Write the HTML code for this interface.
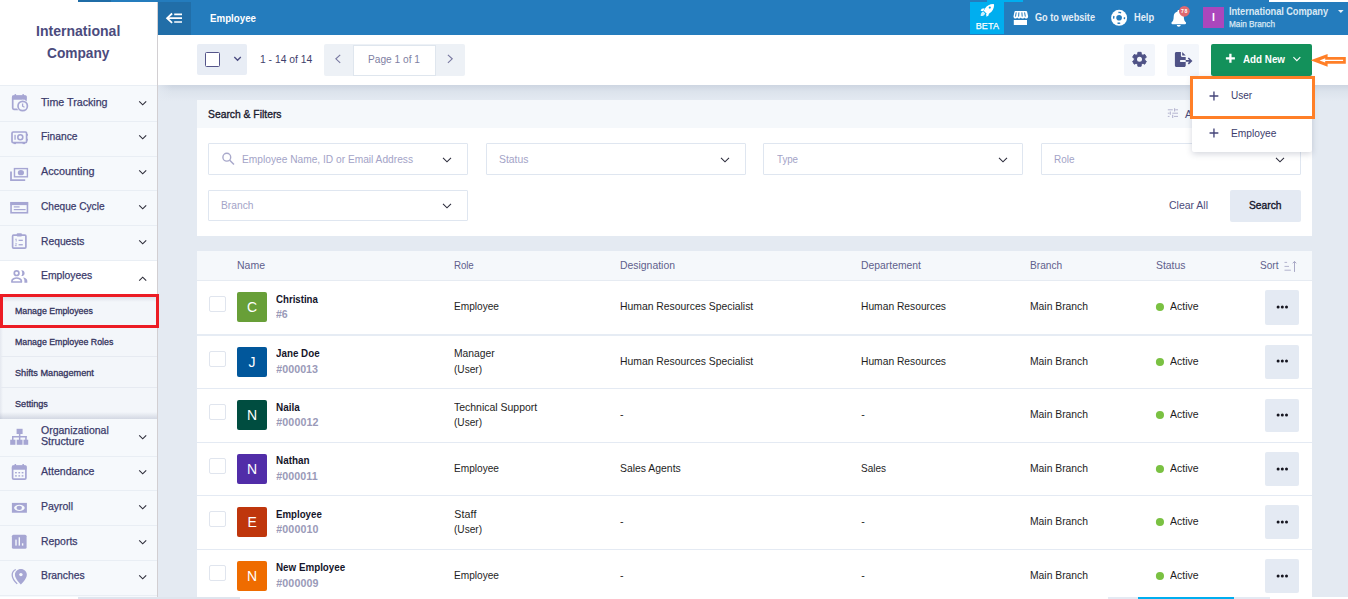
<!DOCTYPE html>
<html lang="en"><head><meta charset="utf-8"><title>Employee</title>
<style>
*{box-sizing:border-box;margin:0;padding:0}
html,body{width:1348px;height:599px;overflow:hidden}
body{position:relative;background:#e4eaf2;font-family:"Liberation Sans",sans-serif;}
.t{position:absolute;white-space:pre;transform-origin:0 0;font-family:"Liberation Sans",sans-serif;}
.a{position:absolute;}
svg{position:absolute;overflow:visible}
.sep{left:0;width:156.5px;height:1px;background:#e9eef4}
.sep2{left:0;width:156.5px;height:1px;background:#e6eaf1}
.inp{width:259.5px;height:31.5px;background:#fff;border:1px solid #dfe6f0;border-radius:1px}
.rsep{left:197px;width:1114.5px;height:1px;background:#e4eaf3}
.cb{width:17px;height:16px;border:1px solid #e0e5ee;border-radius:2px;background:#fff;left:209px}
.av{left:237px;width:30px;height:30px;border-radius:2px}
.act{left:1265px;width:34px;height:34.6px;background:#e4eaf3;border-radius:2px}
.dot{left:1155.75px;width:7.75px;height:7.75px;border-radius:50%;background:#7ac142}

</style></head>
<body>
<!-- content background / shadow under toolbar -->
<div class="a" style="left:158px;top:84.5px;width:1190px;height:16px;background:linear-gradient(90deg,rgba(228,234,242,.75),rgba(228,234,242,0) 14px),linear-gradient(#cdd5e1,#dce3ec 40%,#e4eaf2)"></div>

<!-- SIDEBAR -->
<div class="a" id="sidebar" style="left:0;top:0;width:157.5px;height:597px;background:#f6f9fc;border-right:1px solid #d2cfd2"></div>
<div class="a" style="left:0;top:0;width:156.5px;height:85.5px;background:#fff;border-bottom:1px solid #e9eef4"></div>
<!-- item separators -->
<div class="a sep" style="top:121px"></div>
<div class="a sep" style="top:155.5px"></div>
<div class="a sep" style="top:190px"></div>
<div class="a sep" style="top:225px"></div>
<div class="a sep" style="top:260px"></div>
<div class="a" style="left:0;top:260.5px;width:156.5px;height:34px;background:#fff"></div>
<!-- submenu -->
<div class="a" style="left:0;top:294.5px;width:156.5px;height:124px;background:linear-gradient(rgba(120,130,160,.26),rgba(120,130,160,0) 7px),linear-gradient(0deg,rgba(120,130,160,.26),rgba(120,130,160,0) 7px),linear-gradient(90deg,rgba(120,130,160,.12),rgba(120,130,160,0) 3px),#f3f6fa"></div>
<div class="a sep2" style="top:327px"></div>
<div class="a sep2" style="top:356px"></div>
<div class="a sep2" style="top:387px"></div>
<div class="a sep" style="top:455.5px"></div>
<div class="a sep" style="top:490px"></div>
<div class="a sep" style="top:525px"></div>
<div class="a sep" style="top:560px"></div>
<div class="a sep" style="top:594.5px"></div>
<!-- red highlight -->
<div class="a" style="left:-0.4px;top:294.15px;width:159.4px;height:33.85px;border:3px solid #ec1c24;"></div>

<!-- TOP STRIP -->
<div class="a" style="left:78px;top:0;width:32.5px;height:2px;background:#1f6ca6"></div>
<div class="a" style="left:110.5px;top:0;width:1158.5px;height:2px;background:#247cbd"></div>
<div class="a" style="left:1269px;top:0;width:79px;height:2px;background:#fff"></div>
<!-- TOPBAR -->
<div class="a" style="left:157.5px;top:2px;width:1190.5px;height:33px;background:#247cbd"></div>
<div class="a" style="left:157.5px;top:2px;width:33px;height:33px;background:#216ea8"></div>
<!-- beta -->
<div class="a" style="left:970px;top:2px;width:34px;height:32px;background:#00aeef"></div>
<div class="a" style="left:987px;top:0;width:36px;height:2px;background:#00aeef"></div>
<!-- user avatar -->
<div class="a" style="left:1202.5px;top:7px;width:21.5px;height:20.5px;background:#ab47bc"></div>
<!-- notification badge -->

<!-- TOOLBAR -->
<div class="a" style="left:158px;top:35px;width:1190px;height:49.5px;background:#fff"></div>
<div class="a" style="left:197px;top:44.25px;width:49.75px;height:30.75px;background:#e8edf5;border-radius:2px"></div>
<div class="a" style="left:205px;top:52px;width:15px;height:15px;background:#fff;border:1px solid #55558a;border-radius:1.5px"></div>
<div class="a" style="left:324px;top:44.25px;width:140.5px;height:31.5px;background:#edf1f6;border-radius:2px"></div>
<div class="a" style="left:352.5px;top:44.5px;width:83.5px;height:31px;background:#fff;border:1px solid #dfe6ee"></div>
<div class="a" style="left:1124px;top:44px;width:31px;height:31.5px;background:#f3f6fb;border-radius:2px"></div>
<div class="a" style="left:1167px;top:44px;width:31.5px;height:31.5px;background:#f3f6fb;border-radius:2px"></div>
<div class="a" style="left:1210.5px;top:44px;width:101px;height:31.5px;background:#13915b;border-radius:2px"></div>

<!-- FILTER CARD -->
<div class="a" style="left:197px;top:100px;width:1114.5px;height:135.75px;background:#fff"></div>
<div class="a" style="left:197px;top:100px;width:1114.5px;height:27.5px;background:#f5f8fb"></div>
<div class="a inp" style="left:208px;top:143px"></div>
<div class="a inp" style="left:486.25px;top:143px"></div>
<div class="a inp" style="left:762.75px;top:143px;width:260px"></div>
<div class="a inp" style="left:1041px;top:143px"></div>
<div class="a inp" style="left:208px;top:190px;height:30.5px"></div>
<div class="a" style="left:1229.75px;top:189.75px;width:70.75px;height:31.75px;background:#e4eaf3;border-radius:2px"></div>

<!-- TABLE -->
<div class="a" style="left:197px;top:250.5px;width:1114.5px;height:350px;background:#fff"></div>
<div class="a" style="left:197px;top:250.5px;width:1114.5px;height:30px;background:#f5f8fb;border-bottom:1px solid #e6ebf2"></div>
<div class="a" style="left:197px;top:333.7px;width:1114.5px;height:1.9px;background:#e6ecf4"></div>
<div class="a rsep" style="top:387.6px"></div>
<div class="a rsep" style="top:441.6px"></div>
<div class="a rsep" style="top:494.8px"></div>
<div class="a rsep" style="top:548.6px"></div>
<div class="a cb" style="top:296.00px"></div>
<div class="a av" style="top:292.10px;background:#689f38"></div>
<svg style="left:1155px;top:302.00px" width="10" height="10" viewBox="1155 302.00 10 10"><circle cx="1159.95" cy="307.00" r="4.05" fill="#7ac142"/></svg>
<div class="a act" style="top:290.10px;height:34.65px"></div>
<svg style="left:1274px;top:303.52px" width="17" height="6" viewBox="1274 303.52 17 6"><g fill="#15151f"><circle cx="1278.1" cy="306.52" r="1.5"/><circle cx="1282.3" cy="306.52" r="1.5"/><circle cx="1286.5" cy="306.52" r="1.5"/></g></svg>
<div class="a cb" style="top:350.80px"></div>
<div class="a av" style="top:346.90px;background:#01579b"></div>
<svg style="left:1155px;top:357.00px" width="10" height="10" viewBox="1155 357.00 10 10"><circle cx="1159.95" cy="362.00" r="4.05" fill="#7ac142"/></svg>
<div class="a act" style="top:345.05px;height:33.7px"></div>
<svg style="left:1274px;top:358.47px" width="17" height="6" viewBox="1274 358.47 17 6"><g fill="#15151f"><circle cx="1278.1" cy="361.47" r="1.5"/><circle cx="1282.3" cy="361.47" r="1.5"/><circle cx="1286.5" cy="361.47" r="1.5"/></g></svg>
<div class="a cb" style="top:404.30px"></div>
<div class="a av" style="top:400.40px;background:#004d40"></div>
<svg style="left:1155px;top:410.00px" width="10" height="10" viewBox="1155 410.00 10 10"><circle cx="1159.95" cy="415.00" r="4.05" fill="#7ac142"/></svg>
<div class="a act" style="top:398.55px;height:33.7px"></div>
<svg style="left:1274px;top:411.97px" width="17" height="6" viewBox="1274 411.97 17 6"><g fill="#15151f"><circle cx="1278.1" cy="414.97" r="1.5"/><circle cx="1282.3" cy="414.97" r="1.5"/><circle cx="1286.5" cy="414.97" r="1.5"/></g></svg>
<div class="a cb" style="top:457.90px"></div>
<div class="a av" style="top:454.00px;background:#512da8"></div>
<svg style="left:1155px;top:464.00px" width="10" height="10" viewBox="1155 464.00 10 10"><circle cx="1159.95" cy="469.00" r="4.05" fill="#7ac142"/></svg>
<div class="a act" style="top:452.15px;height:33.7px"></div>
<svg style="left:1274px;top:465.57px" width="17" height="6" viewBox="1274 465.57 17 6"><g fill="#15151f"><circle cx="1278.1" cy="468.57" r="1.5"/><circle cx="1282.3" cy="468.57" r="1.5"/><circle cx="1286.5" cy="468.57" r="1.5"/></g></svg>
<div class="a cb" style="top:511.20px"></div>
<div class="a av" style="top:507.30px;background:#bf360c"></div>
<svg style="left:1155px;top:517.00px" width="10" height="10" viewBox="1155 517.00 10 10"><circle cx="1159.95" cy="522.00" r="4.05" fill="#7ac142"/></svg>
<div class="a act" style="top:505.45px;height:33.7px"></div>
<svg style="left:1274px;top:518.87px" width="17" height="6" viewBox="1274 518.87 17 6"><g fill="#15151f"><circle cx="1278.1" cy="521.87" r="1.5"/><circle cx="1282.3" cy="521.87" r="1.5"/><circle cx="1286.5" cy="521.87" r="1.5"/></g></svg>
<div class="a cb" style="top:564.90px"></div>
<div class="a av" style="top:561.00px;background:#ef6c00"></div>
<svg style="left:1155px;top:571.00px" width="10" height="10" viewBox="1155 571.00 10 10"><circle cx="1159.95" cy="576.00" r="4.05" fill="#7ac142"/></svg>
<div class="a act" style="top:559.15px;height:33.7px"></div>
<svg style="left:1274px;top:572.57px" width="17" height="6" viewBox="1274 572.57 17 6"><g fill="#15151f"><circle cx="1278.1" cy="575.57" r="1.5"/><circle cx="1282.3" cy="575.57" r="1.5"/><circle cx="1286.5" cy="575.57" r="1.5"/></g></svg>

<!-- DROPDOWN -->
<div class="a" style="z-index:5;left:1192px;top:76px;width:119.8px;height:76.1px;background:#fff;border-radius:0 0 2px 2px;box-shadow:0 2px 6px rgba(60,70,100,.22)"></div>
<div class="a" style="z-index:5;left:1190px;top:76.1px;width:125px;height:42.6px;border:3px solid #ff7f27;background:#fff"></div>

<!-- bottom strips -->
<div class="a" style="z-index:7;left:0;top:596.8px;width:1348px;height:2.2px;background:#fff"></div>
<div class="a" style="z-index:7;left:78px;top:596.8px;width:161.5px;height:2.2px;background:#dfe5ee"></div>
<div class="a" style="z-index:7;left:1108.2px;top:596.8px;width:161.8px;height:2.2px;background:#e4eaf3"></div>
<div class="a" style="z-index:7;left:1137.9px;top:596.8px;width:96.1px;height:2.2px;background:#00aeef"></div>

<svg style="left:10px;top:92px" width="22" height="22" viewBox="10 92 22 22">
<rect x="12.7" y="96.1" width="13.2" height="13.2" rx="1.2" fill="none" stroke="#a6a6d3" stroke-width="1.7"/>
<rect x="12" y="95.4" width="14.6" height="4.3" rx="1" fill="#a6a6d3"/>
<rect x="14.6" y="94.1" width="1.5" height="3" fill="#a6a6d3"/><rect x="22.4" y="94.1" width="1.5" height="3" fill="#a6a6d3"/>
<circle cx="22.7" cy="106" r="6.2" fill="#f6f9fc"/>
<circle cx="22.7" cy="106" r="4.7" fill="none" stroke="#a6a6d3" stroke-width="1.7"/>
<path d="M22.6 103.4v2.8l1.9 1.1" fill="none" stroke="#a6a6d3" stroke-width="1.3"/></svg>
<svg style="left:10px;top:129px" width="22" height="18" viewBox="10 129 22 18">
<rect x="12" y="132" width="14.6" height="10.6" rx="1.2" fill="none" stroke="#a6a6d3" stroke-width="1.7"/>
<rect x="13.6" y="143" width="2.4" height="1.1" fill="#a6a6d3"/><rect x="22.6" y="143" width="2.4" height="1.1" fill="#a6a6d3"/>
<rect x="14.4" y="134.8" width="1.3" height="5" fill="#a6a6d3"/>
<circle cx="20.3" cy="137.3" r="2.5" fill="none" stroke="#a6a6d3" stroke-width="1.6"/>
<rect x="26.9" y="134" width="1" height="1.8" fill="#a6a6d3"/><rect x="26.9" y="138.8" width="1" height="1.8" fill="#a6a6d3"/></svg>
<svg style="left:9px;top:166px" width="22" height="17" viewBox="9 166 22 17">
<path d="M11 171.4V180.2H25.2" fill="none" stroke="#a6a6d3" stroke-width="1.8"/>
<rect x="13.75" y="167.9" width="14.35" height="9.6" fill="#a6a6d3"/>
<rect x="15.2" y="169.3" width="11.5" height="6.8" fill="#f6f9fc"/>
<ellipse cx="20.9" cy="172.7" rx="3.1" ry="2.6" fill="#a6a6d3"/></svg>
<svg style="left:9px;top:200px" width="22" height="16" viewBox="9 200 22 16">
<rect x="11.05" y="202.75" width="16.4" height="10" fill="none" stroke="#a6a6d3" stroke-width="1.6"/>
<rect x="10.4" y="202.1" width="17.7" height="3" fill="#a6a6d3"/>
<rect x="13.8" y="206.3" width="5.8" height="1.2" fill="#a6a6d3"/>
<rect x="13.8" y="209" width="11.8" height="1.2" fill="#a6a6d3"/></svg>
<svg style="left:10px;top:231px" width="20" height="20" viewBox="10 231 20 20">
<rect x="12.6" y="235.2" width="13.3" height="12.9" rx="1" fill="none" stroke="#a6a6d3" stroke-width="1.7"/>
<rect x="16.7" y="233.2" width="5.2" height="3.2" rx="0.9" fill="#a6a6d3"/>
<path d="M15.3 239.4l.9-.5v2.7M15.2 243.6c.3-.5 1.4-.5 1.4.2 0 .6-1.4 1.2-1.4 1.9h1.6" fill="none" stroke="#a6a6d3" stroke-width=".8"/>
<rect x="18.6" y="239.7" width="4.2" height="1.3" fill="#a6a6d3"/>
<rect x="18.6" y="244.1" width="4.2" height="1.3" fill="#a6a6d3"/></svg>
<svg style="left:10px;top:269px" width="20" height="16" viewBox="10 269 20 16">
<circle cx="16.6" cy="273.2" r="2.3" fill="none" stroke="#a6a6d3" stroke-width="1.7"/>
<path d="M11.95 282v-1.1c0-1.900 3.100-2.900 4.700-2.900s4.700 1 4.700 2.900v1.100z" fill="none" stroke="#a6a6d3" stroke-width="1.700" stroke-linejoin="round"/>
<path d="M21.300 270.300c1.900-.2 3.300 1.200 3.300 2.900s-1.400 3.100-3.300 2.900c1.300-1.700 1.300-4.100 0-5.800z" fill="#a6a6d3"/>
<path d="M23 277.600c2.100.3 4.300 1.300 4.300 3.200v1.900h-2.900v-1.900c0-1.300-.5-2.400-1.400-3.200z" fill="#a6a6d3"/></svg>
<svg style="left:9px;top:428px" width="21" height="18" viewBox="9 428 21 18">
<rect x="16.6" y="428.8" width="6" height="5.2" fill="#a6a6d3"/>
<rect x="10.2" y="439.7" width="5.2" height="5.1" fill="#a6a6d3"/>
<rect x="16.7" y="439.7" width="5.8" height="5.1" fill="#a6a6d3"/>
<rect x="23.5" y="439.7" width="4.7" height="5.1" fill="#a6a6d3"/>
<rect x="18.9" y="433.5" width="1.5" height="6.500" fill="#a6a6d3"/>
<rect x="12" y="436" width="14.700" height="1.500" fill="#a6a6d3"/>
<rect x="12" y="436" width="1.500" height="4" fill="#a6a6d3"/>
<rect x="25.200" y="436" width="1.500" height="4" fill="#a6a6d3"/></svg>
<svg style="left:10px;top:462px" width="20" height="20" viewBox="10 462 20 20">
<rect x="12.6" y="466.2" width="13.3" height="13" rx="1.2" fill="none" stroke="#a6a6d3" stroke-width="1.7"/>
<rect x="11.9" y="465.5" width="14.7" height="4.3" rx="1" fill="#a6a6d3"/>
<rect x="14.6" y="464" width="1.5" height="3" fill="#a6a6d3"/><rect x="22.4" y="464" width="1.5" height="3" fill="#a6a6d3"/>
<g fill="#a6a6d3"><rect x="15.1" y="472" width="1.7" height="1.4"/><rect x="18.4" y="472" width="1.7" height="1.4"/><rect x="21.7" y="472" width="1.7" height="1.4"/>
<rect x="15.1" y="475.2" width="1.7" height="1.4"/><rect x="18.4" y="475.2" width="1.7" height="1.4"/><rect x="21.7" y="475.2" width="1.7" height="1.4"/></g></svg>
<svg style="left:10px;top:501px" width="20" height="14" viewBox="10 501 20 14">
<rect x="11.9" y="502.9" width="15" height="9.85" fill="#a6a6d3"/>
<ellipse cx="19.4" cy="507.85" rx="5.3" ry="3.1" fill="#f6f9fc"/>
<ellipse cx="19.3" cy="507.85" rx="2.7" ry="2.1" fill="#a6a6d3"/></svg>
<svg style="left:10px;top:533px" width="20" height="18" viewBox="10 533 20 18">
<rect x="11.9" y="534.75" width="14.7" height="14" rx="1.6" fill="#a6a6d3"/>
<rect x="15.3" y="539.6" width="1.4" height="6" fill="#f6f9fc"/>
<rect x="18.6" y="537.3" width="1.4" height="8.3" fill="#f6f9fc"/>
<rect x="21.9" y="543.3" width="1.4" height="2.3" fill="#f6f9fc"/></svg>
<svg style="left:10px;top:567px" width="20" height="20" viewBox="10 567 20 20">
<path d="M20.9 568.9c-3.3 0-5.95 2.5-5.95 5.8c0 4.2 5.95 9.8 5.95 9.8s5.95-5.6 5.95-9.8c0-3.3-2.65-5.8-5.95-5.8z" fill="#a6a6d3"/>
<circle cx="20.9" cy="574.6" r="1.7" fill="#f6f9fc"/>
<path d="M15.8 569.5c-2.2 1-3.6 3-3.6 5.4c0 3.2 2.8 6.800 5 9" fill="none" stroke="#a6a6d3" stroke-width="1.3"/></svg>
<svg style="left:137px;top:98.8px" width="11" height="8" viewBox="137 98.8 11 8"><path d="M139.2 101.1l3.5 3.5l3.5-3.5" fill="none" stroke="#30303c" stroke-width="1.15"/></svg>
<svg style="left:137px;top:133.4px" width="11" height="8" viewBox="137 133.4 11 8"><path d="M139.2 135.70000000000002l3.5 3.5l3.5-3.5" fill="none" stroke="#30303c" stroke-width="1.15"/></svg>
<svg style="left:137px;top:168.0px" width="11" height="8" viewBox="137 168.0 11 8"><path d="M139.2 170.3l3.5 3.5l3.5-3.5" fill="none" stroke="#30303c" stroke-width="1.15"/></svg>
<svg style="left:137px;top:202.8px" width="11" height="8" viewBox="137 202.8 11 8"><path d="M139.2 205.10000000000002l3.5 3.5l3.5-3.5" fill="none" stroke="#30303c" stroke-width="1.15"/></svg>
<svg style="left:137px;top:237.8px" width="11" height="8" viewBox="137 237.8 11 8"><path d="M139.2 240.10000000000002l3.5 3.5l3.5-3.5" fill="none" stroke="#30303c" stroke-width="1.15"/></svg>
<svg style="left:137px;top:432.8px" width="11" height="8" viewBox="137 432.8 11 8"><path d="M139.2 435.1l3.5 3.5l3.5-3.5" fill="none" stroke="#30303c" stroke-width="1.15"/></svg>
<svg style="left:137px;top:467.8px" width="11" height="8" viewBox="137 467.8 11 8"><path d="M139.2 470.1l3.5 3.5l3.5-3.5" fill="none" stroke="#30303c" stroke-width="1.15"/></svg>
<svg style="left:137px;top:502.6px" width="11" height="8" viewBox="137 502.6 11 8"><path d="M139.2 504.90000000000003l3.5 3.5l3.5-3.5" fill="none" stroke="#30303c" stroke-width="1.15"/></svg>
<svg style="left:137px;top:537.6px" width="11" height="8" viewBox="137 537.6 11 8"><path d="M139.2 539.9l3.5 3.5l3.5-3.5" fill="none" stroke="#30303c" stroke-width="1.15"/></svg>
<svg style="left:137px;top:572.6px" width="11" height="8" viewBox="137 572.6 11 8"><path d="M139.2 574.9l3.5 3.5l3.5-3.5" fill="none" stroke="#30303c" stroke-width="1.15"/></svg>
<svg style="left:137px;top:274.75px" width="11" height="8" viewBox="137 274.75 11 8"><path d="M139.2 280.45l3.5-3.5l3.5 3.5" fill="none" stroke="#30303c" stroke-width="1.15"/></svg>
<svg style="left:164px;top:11px" width="20" height="14" viewBox="164 11 20 14"><g fill="none" stroke="#fff" stroke-width="1.7">
<path d="M174.2 14.3H182M167.4 18.2H182M174.2 22H182"/><path d="M172.1 13.500L167.1 18.2L172.1 22.900" stroke-width="1.8"/></g></svg>
<svg style="left:979px;top:3px" width="16" height="15" viewBox="979 3 16 15"><g fill="#fff">
<path d="M993.3 4.1c-3.600.1-6.500 1.600-8.300 4.500l-1.300 2.100l3.800 3.800l2.100-1.300c2.900-1.800 4.400-4.700 4.500-8.300c0-.5-.3-.8-.8-.8z"/>
<path d="M984.600 8.300l-2.900.5l-1.100 2l2.600.4zM989 12.700l-.5 2.900l-2 1.100l-.4-2.600z"/>
<path d="M983.300 11.600c-1.700.3-2.700 2.200-2.600 4.400c2.200.1 4.100-.9 4.400-2.600z" opacity=".8"/></g>
<circle cx="989.800" cy="7.600" r="1.100" fill="#00adef"/></svg>
<svg style="left:1011px;top:10px" width="19" height="17" viewBox="1011 10 19 17">
<path d="M1014.600 11h11.500c.5 0 .9.300 1 .8l1 4.400c.2 1.300-.7 2.400-1.900 2.400c-.8 0-1.500-.5-1.800-1.100c-.3.600-1 1.100-1.800 1.100s-1.500-.5-1.800-1.100c-.3.600-1 1.100-1.800 1.100s-1.500-.5-1.800-1.100c-.3.600-1 1.100-1.800 1.100c-1.200 0-2.100-1.100-1.900-2.400l1-4.400c.1-.5.500-.8 1-.8z" fill="#fff"/>
<g stroke="#247cbd" stroke-width="1" fill="none"><path d="M1016.200 12.400l-.7 4.200M1018.900 12.400l-.3 4.200M1021.900 12.400l.3 4.200M1024.600 12.400l.7 4.200"/></g>
<rect x="1013.800" y="20" width="13.200" height="5" fill="#fff"/></svg>
<svg style="left:1110px;top:9px" width="18" height="18" viewBox="1110 9 18 18"><circle cx="1119.100" cy="17.800" r="8" fill="#fff"/>
<circle cx="1119.100" cy="17.800" r="2.800" fill="#247cbd"/>
<circle cx="1119.100" cy="17.800" r="5.400" fill="none" stroke="#247cbd" stroke-width="1.400" stroke-dasharray="2.800 5.682" stroke-dashoffset="1.400"/></svg>
<svg style="left:1170px;top:9px" width="18" height="19" viewBox="1170 9 18 19"><path d="M1178.700 9.900c-.7 0-1.200.5-1.200 1.200v.4c-2.300.5-3.800 2.500-3.800 4.900c0 3.600-1 4.900-2 5.900c-.6.600-.2 1.900.8 1.900h12.500c1 0 1.400-1.300.8-1.900c-1-1-2-2.300-2-5.900c0-2.400-1.500-4.400-3.800-4.900v-.4c0-.7-.5-1.200-1.300-1.200z" fill="#fff"/>
<path d="M1176.800 25.100h3.900c0 1-.9 1.700-1.950 1.700s-1.950-.7-1.950-1.700z" fill="#fff"/></svg>
<svg style="left:1178px;top:5px" width="13" height="13" viewBox="1178 5 13 13"><circle cx="1184.400" cy="11.300" r="5.400" fill="#e0696f"/></svg>
<svg style="left:1337px;top:9px" width="8" height="5" viewBox="1337 9 8 5"><path d="M1338 10h5.600l-2.800 3.100z" fill="#e4eef7"/></svg>
<svg style="left:232px;top:54px" width="11" height="9" viewBox="232 54 11 9"><path d="M234.300 57l3.250 3.250l3.250-3.250" fill="none" stroke="#4c4c80" stroke-width="1.300"/></svg>
<svg style="left:333px;top:52px" width="10" height="13" viewBox="333 52 10 13"><path d="M340.200 54.800l-4.300 4l4.300 4" fill="none" stroke="#7878a0" stroke-width="1.150"/></svg>
<svg style="left:445px;top:52px" width="10" height="13" viewBox="445 52 10 13"><path d="M447.900 54.800l4.300 4l-4.300 4" fill="none" stroke="#7878a0" stroke-width="1.150"/></svg>
<svg style="left:1130px;top:50px" width="19" height="19" viewBox="1130 50 19 19"><path d="M1137.73 54.30L1137.87 52.34L1141.13 52.34L1141.27 54.30L1142.94 55.27L1144.71 54.41L1146.34 57.23L1144.71 58.33L1144.71 60.27L1146.34 61.37L1144.71 64.19L1142.94 63.33L1141.27 64.30L1141.13 66.26L1137.87 66.26L1137.73 64.30L1136.06 63.33L1134.29 64.19L1132.66 61.37L1134.29 60.27L1134.29 58.33L1132.66 57.23L1134.29 54.41L1136.06 55.27z" fill="#4f5286" stroke="#4f5286" stroke-width="1" stroke-linejoin="round"/><circle cx="1139.5" cy="59.3" r="2.5" fill="#f4f7fc"/></svg>
<svg style="left:1172px;top:50px" width="22" height="19" viewBox="1172 50 22 19">
<path d="M1176.400 51.900h4.500v3.900c0 .7.500 1.100 1.100 1.100h3.700v3h-4.700c-.6 0-1.100.5-1.100 1.100s.5 1.100 1.100 1.100h4.700v3.400c0 .8-.7 1.500-1.500 1.500h-7.800c-.8 0-1.500-.7-1.500-1.500v-12.100c0-.8.700-1.500 1.500-1.500z" fill="#4f5286"/>
<path d="M1182.200 51.900l3.500 3.700h-3.500z" fill="#4f5286"/>
<path d="M1185.700 60.900h4.600M1188.300 58l3 2.900l-3 2.900" fill="none" stroke="#4f5286" stroke-width="1.600"/></svg>
<svg style="left:1224px;top:52px" width="13" height="13" viewBox="1224 52 13 13"><path d="M1230.400 53.800v9M1225.900 58.300h9" stroke="#fff" stroke-width="2.300" fill="none"/></svg>
<svg style="left:1291px;top:55px" width="12" height="8" viewBox="1291 55 12 8"><path d="M1293.400 57.200l3.450 3.450l3.450-3.450" fill="none" stroke="#fff" stroke-width="1.100"/></svg>
<svg style="left:1309px;top:52px" width="39" height="16" viewBox="1309 52 39 16"><path d="M1310.600 60.300L1327.600 54V56.900H1345.800V63.700H1327.600V66.700z" fill="#ff7f27"/>
<path d="M1319.600 60.400L1325.200 58.200V59.800H1343.100V61.100H1325.200V62.600z" fill="#fff"/></svg>
<svg style="left:220px;top:151px" width="16" height="15" viewBox="220 151 16 15"><circle cx="226.800" cy="157.200" r="3.900" fill="none" stroke="#a9a9cb" stroke-width="1.400"/><path d="M229.700 160.200l4.300 4.300" stroke="#a9a9cb" stroke-width="1.500" fill="none"/></svg>
<svg style="left:440.75px;top:155.5px" width="12" height="8" viewBox="440.75 155.5 12 8"><path d="M442.75 157.3l4 4l4-4" fill="none" stroke="#2b2b3b" stroke-width="1.050"/></svg>
<svg style="left:718.6px;top:155.5px" width="12" height="8" viewBox="718.6 155.5 12 8"><path d="M720.6 157.3l4 4l4-4" fill="none" stroke="#2b2b3b" stroke-width="1.050"/></svg>
<svg style="left:996.9px;top:155.5px" width="12" height="8" viewBox="996.9 155.5 12 8"><path d="M998.9 157.3l4 4l4-4" fill="none" stroke="#2b2b3b" stroke-width="1.050"/></svg>
<svg style="left:1273.5px;top:155.5px" width="12" height="8" viewBox="1273.5 155.5 12 8"><path d="M1275.5 157.3l4 4l4-4" fill="none" stroke="#2b2b3b" stroke-width="1.050"/></svg>
<svg style="left:440.75px;top:201.5px" width="12" height="8" viewBox="440.75 201.5 12 8"><path d="M442.75 203.3l4 4l4-4" fill="none" stroke="#2b2b3b" stroke-width="1.050"/></svg>
<svg style="left:1166px;top:107px" width="14" height="12" viewBox="1166 107 14 12"><g stroke="#b4b4cf" stroke-width="1" fill="none">
<path d="M1167.800 109.800h5M1175.300 109.800h2.700M1167.800 113.200h1.700M1172.300 113.200h5.700M1167.800 116.400h1.700M1174 116.400h4"/>
<path d="M1174.600 108.200v3.200M1170.300 111.600v3.200M1172.700 114.800v3.200" stroke-width="1.100"/></g></svg>
<svg style="left:1283px;top:260px" width="15" height="13" viewBox="1283 260 15 13"><g stroke="#b3b3cd" stroke-width="1" fill="none">
<path d="M1284.500 262.400h2.600M1284.500 266.400h4.500M1284.500 270.200h6.400"/>
<path d="M1294.500 261.300v10.600M1292.700 263.300l1.800-1.900l1.800 1.900" stroke="#a9a9c6"/></g></svg>
<svg style="z-index:6;left:1208px;top:89.5px" width="12" height="12" viewBox="1208 89.5 12 12"><path d="M1213.950 91.1v8.800M1209.550 95.5h8.800" stroke="#45457a" stroke-width="1.350" fill="none"/></svg>
<svg style="z-index:6;left:1208px;top:127.4px" width="12" height="12" viewBox="1208 127.4 12 12"><path d="M1213.950 129.0v8.800M1209.550 133.4h8.800" stroke="#45457a" stroke-width="1.350" fill="none"/></svg>
<span class="t" style="left:36.10px;top:18px;font-size:15px;line-height:25px;color:#4b4b7d;transform:scaleX(0.9365);font-weight:700;">International</span>
<span class="t" style="left:47.10px;top:40px;font-size:15px;line-height:25px;color:#4b4b7d;transform:scaleX(0.9145);font-weight:700;">Company</span>
<span class="t" style="left:40.50px;top:92px;font-size:11px;line-height:20px;color:#3b3b6b;transform:scaleX(0.9684);-webkit-text-stroke:0.25px currentColor;">Time Tracking</span>
<span class="t" style="left:40.50px;top:126px;font-size:11px;line-height:20px;color:#3b3b6b;transform:scaleX(0.9325);-webkit-text-stroke:0.25px currentColor;">Finance</span>
<span class="t" style="left:40.50px;top:161px;font-size:11px;line-height:20px;color:#3b3b6b;transform:scaleX(0.9828);-webkit-text-stroke:0.25px currentColor;">Accounting</span>
<span class="t" style="left:40.50px;top:196px;font-size:11px;line-height:20px;color:#3b3b6b;transform:scaleX(0.9190);-webkit-text-stroke:0.25px currentColor;">Cheque Cycle</span>
<span class="t" style="left:40.50px;top:231px;font-size:11px;line-height:20px;color:#3b3b6b;transform:scaleX(0.9358);-webkit-text-stroke:0.25px currentColor;">Requests</span>
<span class="t" style="left:40.50px;top:265px;font-size:11px;line-height:20px;color:#3b3b6b;transform:scaleX(0.9417);-webkit-text-stroke:0.25px currentColor;">Employees</span>
<span class="t" style="left:15.40px;top:302px;font-size:9.2px;line-height:18px;color:#33335c;transform:scaleX(0.9581);-webkit-text-stroke:0.3px currentColor;">Manage Employees</span>
<span class="t" style="left:15.40px;top:333px;font-size:9.2px;line-height:18px;color:#33335c;transform:scaleX(0.9576);-webkit-text-stroke:0.3px currentColor;">Manage Employee Roles</span>
<span class="t" style="left:15.20px;top:364px;font-size:9.2px;line-height:18px;color:#33335c;transform:scaleX(0.9966);-webkit-text-stroke:0.3px currentColor;">Shifts Management</span>
<span class="t" style="left:15.20px;top:395px;font-size:9.2px;line-height:18px;color:#33335c;transform:scaleX(0.9909);-webkit-text-stroke:0.3px currentColor;">Settings</span>
<span class="t" style="left:40.50px;top:420px;font-size:11px;line-height:20px;color:#3b3b6b;transform:scaleX(0.9551);-webkit-text-stroke:0.25px currentColor;">Organizational</span>
<span class="t" style="left:40.50px;top:431px;font-size:11px;line-height:20px;color:#3b3b6b;transform:scaleX(0.9688);-webkit-text-stroke:0.25px currentColor;">Structure</span>
<span class="t" style="left:40.50px;top:461px;font-size:11px;line-height:20px;color:#3b3b6b;transform:scaleX(0.9613);-webkit-text-stroke:0.25px currentColor;">Attendance</span>
<span class="t" style="left:40.50px;top:496px;font-size:11px;line-height:20px;color:#3b3b6b;transform:scaleX(0.9517);-webkit-text-stroke:0.25px currentColor;">Payroll</span>
<span class="t" style="left:40.50px;top:531px;font-size:11px;line-height:20px;color:#3b3b6b;transform:scaleX(0.9473);-webkit-text-stroke:0.25px currentColor;">Reports</span>
<span class="t" style="left:40.50px;top:565px;font-size:11px;line-height:20px;color:#3b3b6b;transform:scaleX(0.9412);-webkit-text-stroke:0.25px currentColor;">Branches</span>
<span class="t" style="left:209.50px;top:8px;font-size:10.6px;line-height:20px;color:#ffffff;transform:scaleX(0.9191);font-weight:700;">Employee</span>
<span class="t" style="left:975.70px;top:17px;font-size:9px;line-height:18px;color:#ffffff;letter-spacing:0.130px;-webkit-text-stroke:0.25px currentColor;">BETA</span>
<span class="t" style="left:1035.30px;top:8px;font-size:10px;line-height:19px;color:#e4eef7;transform:scaleX(0.9152);font-weight:700;">Go to website</span>
<span class="t" style="left:1133.80px;top:8px;font-size:10px;line-height:19px;color:#e4eef7;transform:scaleX(0.9275);font-weight:700;">Help</span>
<span class="t" style="left:1180.90px;top:4px;font-size:5.2px;line-height:14px;color:#ffffff;letter-spacing:0.679px;font-weight:700;">78</span>
<span class="t" style="left:1211.90px;top:7px;font-size:10.5px;line-height:20px;color:#ffffff;font-weight:700;">I</span>
<span class="t" style="left:1229.00px;top:2px;font-size:10.3px;line-height:19px;color:#d9e8f4;letter-spacing:-0.076px;transform:scaleX(0.9000);font-weight:700;">International Company</span>
<span class="t" style="left:1229.00px;top:15px;font-size:8.3px;line-height:18px;color:#d9e8f4;transform:scaleX(0.9876);-webkit-text-stroke:0.25px currentColor;">Main Branch</span>
<span class="t" style="left:259.50px;top:49px;font-size:11px;line-height:20px;color:#3f3f6c;transform:scaleX(0.9388);">1 - 14 of 14</span>
<span class="t" style="left:367.50px;top:49px;font-size:11px;line-height:20px;color:#7f7fa3;transform:scaleX(0.9239);">Page 1 of 1</span>
<span class="t" style="left:1243.00px;top:49px;font-size:10.7px;line-height:20px;color:#ffffff;transform:scaleX(0.9183);font-weight:700;">Add New</span>
<span class="t" style="left:1231.10px;top:85px;font-size:10.8px;line-height:20px;color:#3b3b6b;transform:scaleX(0.9300);z-index:6;">User</span>
<span class="t" style="left:1231.10px;top:123px;font-size:10.8px;line-height:20px;color:#3b3b6b;transform:scaleX(0.9455);z-index:6;">Employee</span>
<span class="t" style="left:208.00px;top:104px;font-size:11px;line-height:20px;color:#1b1b2f;transform:scaleX(0.9393);-webkit-text-stroke:0.35px currentColor;">Search &amp; Filters</span>
<span class="t" style="left:1185.00px;top:104px;font-size:10.8px;line-height:20px;color:#4b4b7a;">Advanced Search</span>
<span class="t" style="left:241.50px;top:149px;font-size:10.8px;line-height:20px;color:#a3a3c7;transform:scaleX(0.9436);">Employee Name, ID or Email Address</span>
<span class="t" style="left:498.75px;top:149px;font-size:10.8px;line-height:20px;color:#a3a3c7;transform:scaleX(0.9638);">Status</span>
<span class="t" style="left:777.00px;top:149px;font-size:10.8px;line-height:20px;color:#a3a3c7;letter-spacing:-0.025px;transform:scaleX(0.9000);">Type</span>
<span class="t" style="left:1054.00px;top:149px;font-size:10.8px;line-height:20px;color:#a3a3c7;transform:scaleX(0.9226);">Role</span>
<span class="t" style="left:221.00px;top:195px;font-size:10.8px;line-height:20px;color:#a3a3c7;transform:scaleX(0.9498);">Branch</span>
<span class="t" style="left:1168.75px;top:195px;font-size:10.8px;line-height:20px;color:#4b4b7a;transform:scaleX(0.9697);">Clear All</span>
<span class="t" style="left:1249.00px;top:195px;font-size:10.8px;line-height:20px;color:#15152a;transform:scaleX(0.9498);-webkit-text-stroke:0.35px currentColor;">Search</span>
<span class="t" style="left:237.00px;top:255px;font-size:10.8px;line-height:20px;color:#5f5f8c;transform:scaleX(0.9718);">Name</span>
<span class="t" style="left:454.25px;top:255px;font-size:10.8px;line-height:20px;color:#5f5f8c;letter-spacing:-0.078px;transform:scaleX(0.9000);">Role</span>
<span class="t" style="left:620.00px;top:255px;font-size:10.8px;line-height:20px;color:#5f5f8c;transform:scaleX(0.9644);">Designation</span>
<span class="t" style="left:861.25px;top:255px;font-size:10.8px;line-height:20px;color:#5f5f8c;transform:scaleX(0.9612);">Departement</span>
<span class="t" style="left:1029.50px;top:255px;font-size:10.8px;line-height:20px;color:#5f5f8c;transform:scaleX(0.9425);">Branch</span>
<span class="t" style="left:1156.25px;top:255px;font-size:10.8px;line-height:20px;color:#5f5f8c;transform:scaleX(0.9638);">Status</span>
<span class="t" style="left:1260.00px;top:255px;font-size:10.8px;line-height:20px;color:#5f5f8c;transform:scaleX(0.9338);">Sort</span>
<span class="t" style="left:237.10px;top:295px;font-size:14px;line-height:24px;color:#ffffff;width:30px;text-align:center;">C</span>
<span class="t" style="left:276.30px;top:289px;font-size:10.7px;line-height:20px;color:#15152a;transform:scaleX(0.9044);font-weight:700;">Christina</span>
<span class="t" style="left:276.30px;top:304px;font-size:10.7px;line-height:20px;color:#9a9ab8;transform:scaleX(0.9882);font-weight:700;">#6</span>
<span class="t" style="left:454.25px;top:296px;font-size:10.7px;line-height:20px;color:#1e1e1e;transform:scaleX(0.9467);">Employee</span>
<span class="t" style="left:620.00px;top:296px;font-size:10.7px;line-height:20px;color:#1e1e1e;transform:scaleX(0.9711);">Human Resources Specialist</span>
<span class="t" style="left:861.25px;top:296px;font-size:10.7px;line-height:20px;color:#1e1e1e;transform:scaleX(0.9603);">Human Resources</span>
<span class="t" style="left:1029.50px;top:296px;font-size:10.7px;line-height:20px;color:#1e1e1e;transform:scaleX(0.9667);">Main Branch</span>
<span class="t" style="left:1169.90px;top:296px;font-size:10.7px;line-height:20px;color:#1e1e1e;transform:scaleX(0.9825);">Active</span>
<span class="t" style="left:237.10px;top:350px;font-size:14px;line-height:24px;color:#ffffff;width:30px;text-align:center;">J</span>
<span class="t" style="left:276.30px;top:343px;font-size:10.7px;line-height:20px;color:#15152a;transform:scaleX(0.9173);font-weight:700;">Jane Doe</span>
<span class="t" style="left:276.30px;top:359px;font-size:10.7px;line-height:20px;color:#9a9ab8;letter-spacing:0.014px;font-weight:700;">#000013</span>
<span class="t" style="left:454.25px;top:343px;font-size:10.7px;line-height:20px;color:#1e1e1e;transform:scaleX(0.9659);">Manager</span>
<span class="t" style="left:454.25px;top:359px;font-size:10.7px;line-height:20px;color:#1e1e1e;transform:scaleX(0.9432);">(User)</span>
<span class="t" style="left:620.00px;top:351px;font-size:10.7px;line-height:20px;color:#1e1e1e;transform:scaleX(0.9711);">Human Resources Specialist</span>
<span class="t" style="left:861.25px;top:351px;font-size:10.7px;line-height:20px;color:#1e1e1e;transform:scaleX(0.9603);">Human Resources</span>
<span class="t" style="left:1029.50px;top:351px;font-size:10.7px;line-height:20px;color:#1e1e1e;transform:scaleX(0.9667);">Main Branch</span>
<span class="t" style="left:1169.90px;top:351px;font-size:10.7px;line-height:20px;color:#1e1e1e;transform:scaleX(0.9825);">Active</span>
<span class="t" style="left:237.10px;top:403px;font-size:14px;line-height:24px;color:#ffffff;width:30px;text-align:center;">N</span>
<span class="t" style="left:276.30px;top:397px;font-size:10.7px;line-height:20px;color:#15152a;transform:scaleX(0.9277);font-weight:700;">Naila</span>
<span class="t" style="left:276.30px;top:412px;font-size:10.7px;line-height:20px;color:#9a9ab8;letter-spacing:0.091px;font-weight:700;">#000012</span>
<span class="t" style="left:454.25px;top:397px;font-size:10.7px;line-height:20px;color:#1e1e1e;transform:scaleX(0.9798);">Technical Support</span>
<span class="t" style="left:454.25px;top:412px;font-size:10.7px;line-height:20px;color:#1e1e1e;transform:scaleX(0.9432);">(User)</span>
<span class="t" style="left:620.00px;top:404px;font-size:10.7px;line-height:20px;color:#1e1e1e;">-</span>
<span class="t" style="left:861.25px;top:404px;font-size:10.7px;line-height:20px;color:#1e1e1e;">-</span>
<span class="t" style="left:1029.50px;top:404px;font-size:10.7px;line-height:20px;color:#1e1e1e;transform:scaleX(0.9667);">Main Branch</span>
<span class="t" style="left:1169.90px;top:404px;font-size:10.7px;line-height:20px;color:#1e1e1e;transform:scaleX(0.9825);">Active</span>
<span class="t" style="left:237.10px;top:457px;font-size:14px;line-height:24px;color:#ffffff;width:30px;text-align:center;">N</span>
<span class="t" style="left:276.30px;top:450px;font-size:10.7px;line-height:20px;color:#15152a;transform:scaleX(0.9245);font-weight:700;">Nathan</span>
<span class="t" style="left:276.30px;top:466px;font-size:10.7px;line-height:20px;color:#9a9ab8;letter-spacing:0.057px;font-weight:700;">#000011</span>
<span class="t" style="left:454.25px;top:458px;font-size:10.7px;line-height:20px;color:#1e1e1e;transform:scaleX(0.9467);">Employee</span>
<span class="t" style="left:620.00px;top:458px;font-size:10.7px;line-height:20px;color:#1e1e1e;transform:scaleX(0.9737);">Sales Agents</span>
<span class="t" style="left:861.25px;top:458px;font-size:10.7px;line-height:20px;color:#1e1e1e;transform:scaleX(0.9346);">Sales</span>
<span class="t" style="left:1029.50px;top:458px;font-size:10.7px;line-height:20px;color:#1e1e1e;transform:scaleX(0.9667);">Main Branch</span>
<span class="t" style="left:1169.90px;top:458px;font-size:10.7px;line-height:20px;color:#1e1e1e;transform:scaleX(0.9825);">Active</span>
<span class="t" style="left:237.10px;top:510px;font-size:14px;line-height:24px;color:#ffffff;width:30px;text-align:center;">E</span>
<span class="t" style="left:276.30px;top:504px;font-size:10.7px;line-height:20px;color:#15152a;transform:scaleX(0.9069);font-weight:700;">Employee</span>
<span class="t" style="left:276.30px;top:519px;font-size:10.7px;line-height:20px;color:#9a9ab8;letter-spacing:0.091px;font-weight:700;">#000010</span>
<span class="t" style="left:454.25px;top:504px;font-size:10.7px;line-height:20px;color:#1e1e1e;letter-spacing:0.101px;">Staff</span>
<span class="t" style="left:454.25px;top:519px;font-size:10.7px;line-height:20px;color:#1e1e1e;transform:scaleX(0.9432);">(User)</span>
<span class="t" style="left:620.00px;top:511px;font-size:10.7px;line-height:20px;color:#1e1e1e;">-</span>
<span class="t" style="left:861.25px;top:511px;font-size:10.7px;line-height:20px;color:#1e1e1e;">-</span>
<span class="t" style="left:1029.50px;top:511px;font-size:10.7px;line-height:20px;color:#1e1e1e;transform:scaleX(0.9667);">Main Branch</span>
<span class="t" style="left:1169.90px;top:511px;font-size:10.7px;line-height:20px;color:#1e1e1e;transform:scaleX(0.9825);">Active</span>
<span class="t" style="left:237.10px;top:564px;font-size:14px;line-height:24px;color:#ffffff;width:30px;text-align:center;">N</span>
<span class="t" style="left:276.30px;top:557px;font-size:10.7px;line-height:20px;color:#15152a;transform:scaleX(0.9173);font-weight:700;">New Employee</span>
<span class="t" style="left:276.30px;top:573px;font-size:10.7px;line-height:20px;color:#9a9ab8;letter-spacing:0.091px;font-weight:700;">#000009</span>
<span class="t" style="left:454.25px;top:565px;font-size:10.7px;line-height:20px;color:#1e1e1e;transform:scaleX(0.9467);">Employee</span>
<span class="t" style="left:620.00px;top:565px;font-size:10.7px;line-height:20px;color:#1e1e1e;">-</span>
<span class="t" style="left:861.25px;top:565px;font-size:10.7px;line-height:20px;color:#1e1e1e;">-</span>
<span class="t" style="left:1029.50px;top:565px;font-size:10.7px;line-height:20px;color:#1e1e1e;transform:scaleX(0.9667);">Main Branch</span>
<span class="t" style="left:1169.90px;top:565px;font-size:10.7px;line-height:20px;color:#1e1e1e;transform:scaleX(0.9825);">Active</span>
</body></html>
